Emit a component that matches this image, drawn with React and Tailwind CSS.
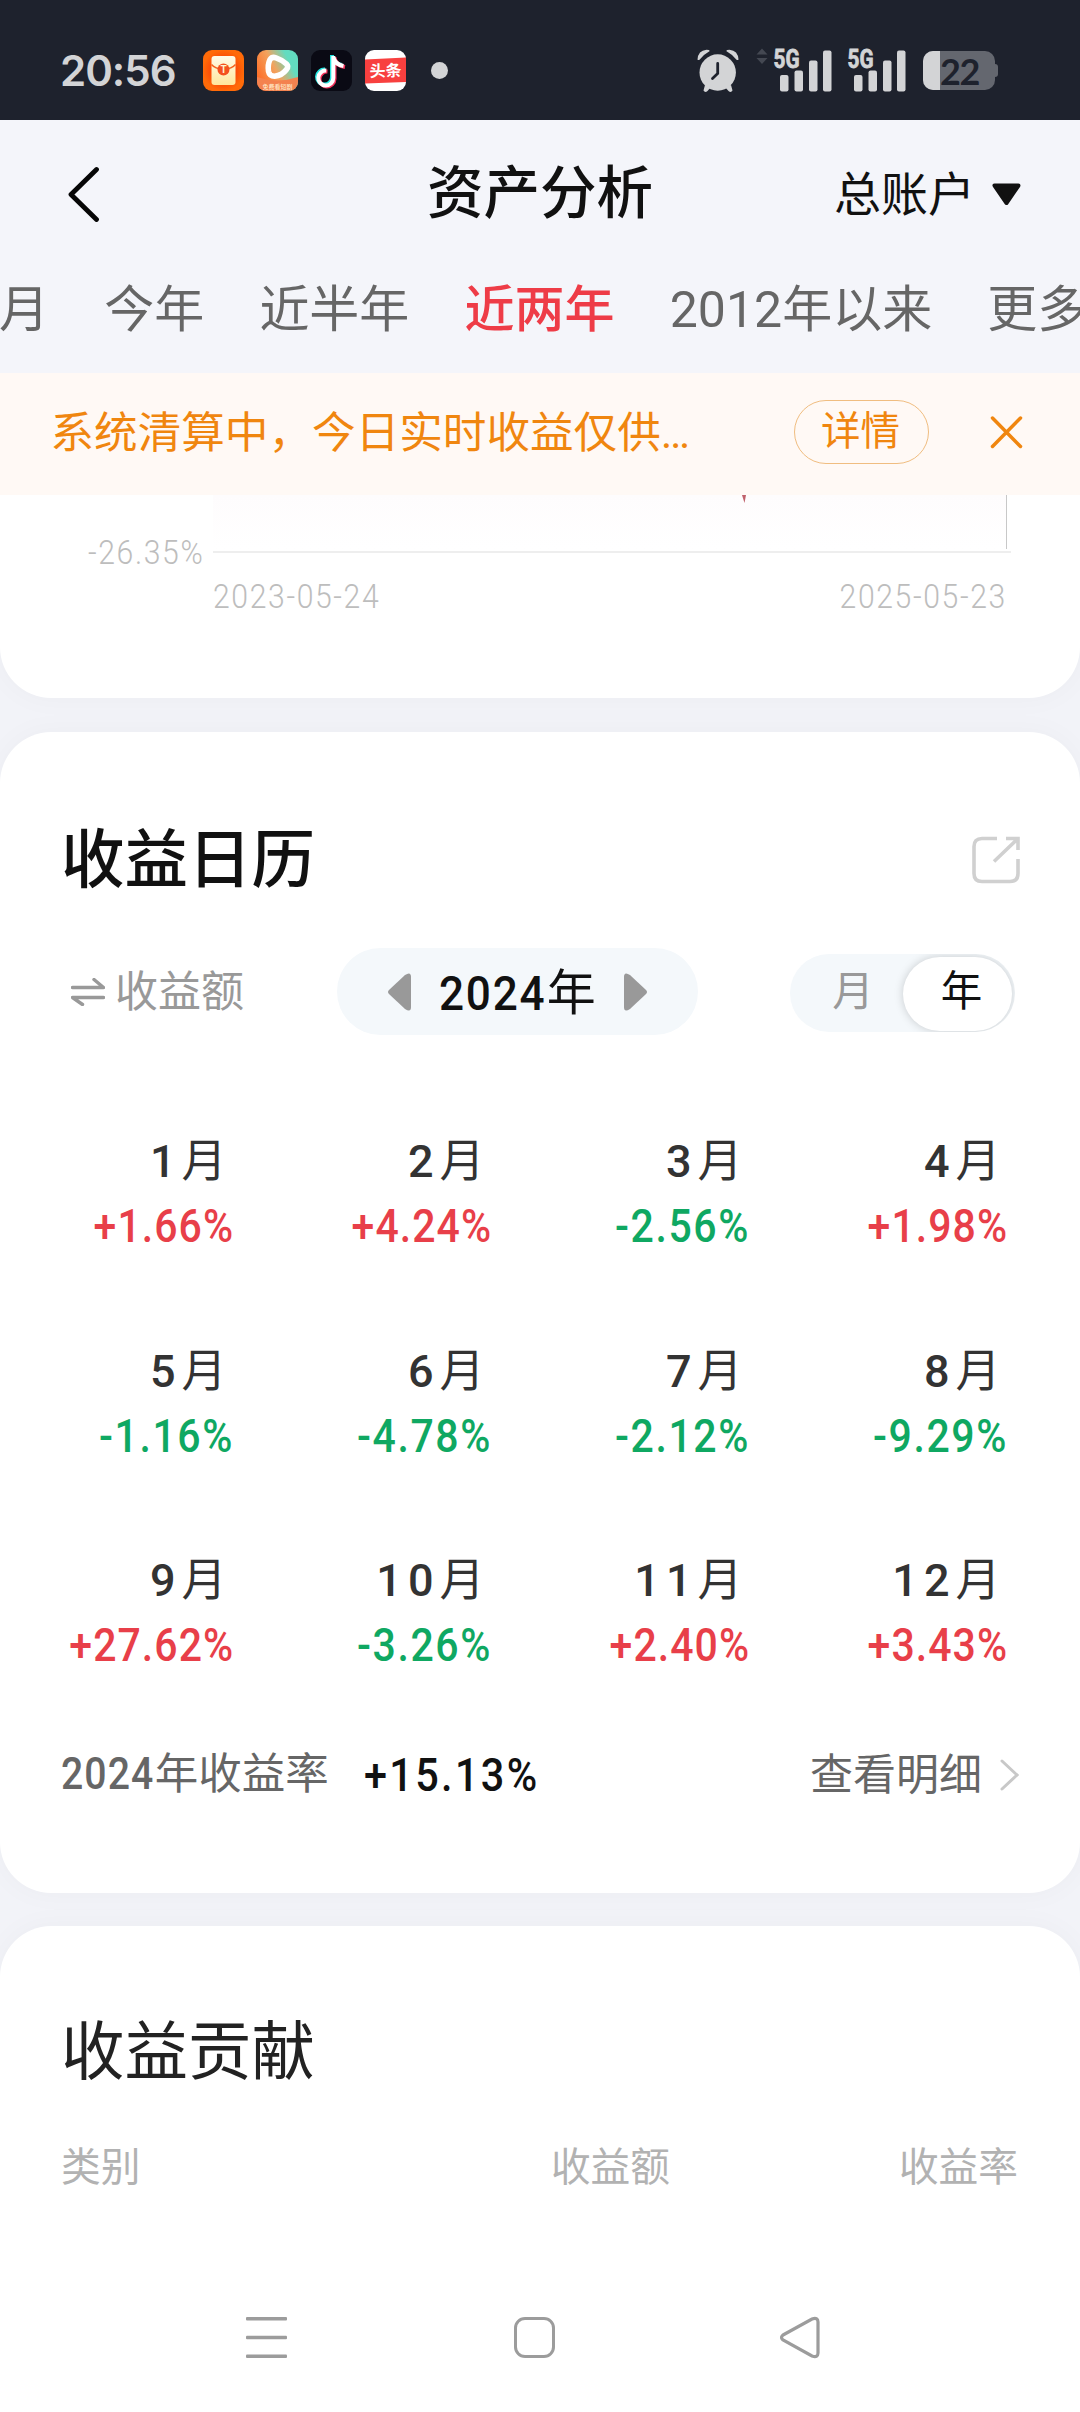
const months = [
  { name: "1", rate: "+1.66%" },
  { name: "2", rate: "+4.24%" },
  { name: "3", rate: "-2.56%" },
  { name: "4", rate: "+1.98%" },
  { name: "5", rate: "-1.16%" },
  { name: "6", rate: "-4.78%" },
  { name: "7", rate: "-2.12%" },
  { name: "8", rate: "-9.29%" },
  { name: "9", rate: "+27.62%" },
  { name: "10", rate: "-3.26%" },
  { name: "11", rate: "+2.40%" },
  { name: "12", rate: "+3.43%" },
];

const ranges = ["月", "今年", "近半年", "近两年", "2012年以来", "更多"];

function AppIcons() {
  return (
    <div className="flex items-center gap-[13px]">
      <svg width="41" height="41" viewBox="0 0 41 41">
        <defs>
          <radialGradient id="packet">
            <stop offset="0.6" stopColor="#fb4a07" />
            <stop offset="1" stopColor="#ff6a08" />
          </radialGradient>
          <linearGradient id="paper" x1="0" y1="0" x2="0" y2="1">
            <stop offset="0" stopColor="#fffbe8" />
            <stop offset="1" stopColor="#ffe79c" />
          </linearGradient>
        </defs>
        <rect width="41" height="41" rx="9" fill="url(#packet)" />
        <rect x="8.5" y="6" width="24" height="29" rx="3" fill="url(#paper)" />
        <path d="M8.5 14.5 Q12 19 20.5 19 Q29 19 32.5 14.5" fill="none" stroke="#f4601c" strokeWidth="1.3" />
        <circle cx="20.5" cy="19.5" r="6" fill="#f4511e" />
        <text x="20.5" y="23.3" textAnchor="middle" fontSize="10" fontWeight="700" fill="#fff3cf" fontFamily="Roboto, sans-serif">
          T
        </text>
      </svg>
      <svg width="41" height="41" viewBox="0 0 41 41">
        <defs>
          <linearGradient id="video" x1="0" y1="0.7" x2="1" y2="0.2">
            <stop offset="0" stopColor="#ff6a24" />
            <stop offset="0.45" stopColor="#f2a35e" />
            <stop offset="0.8" stopColor="#62dcc0" />
          </linearGradient>
          <clipPath id="videoClip">
            <rect width="41" height="41" rx="9" />
          </clipPath>
        </defs>
        <g clipPath="url(#videoClip)">
          <rect width="41" height="41" fill="url(#video)" />
          <path d="M0 27 Q20 34 41 27 V41 H0 Z" fill="#f4824f" />
        </g>
        <path
          d="M13 9.5 Q15 6.5 19 7.8 Q25.5 10 29.5 14 Q32 16.5 29.5 19.5 Q25 25.5 17.5 26.3 Q12.5 26.3 11.5 21.5 Q10.5 14.5 13 9.5 Z"
          fill="none"
          stroke="#fff"
          strokeWidth="5.5"
          strokeLinejoin="round"
        />
        <text x="20.5" y="38.5" textAnchor="middle" fontSize="6" fontWeight="500" fill="#ffe9c8" fontFamily="'Noto Sans CJK SC', sans-serif">
          免费看短剧
        </text>
      </svg>
      <svg width="41" height="41" viewBox="0 0 41 41">
        <rect width="41" height="41" rx="9" fill="#0a0a14" />
        <g fill="none" strokeWidth="4">
          <path d="M21 5 V27 A7.5 7.5 0 1 1 14 19.5 M21 6 Q22.5 14 31 15" stroke="#25e5e0" />
          <path d="M23.5 7 V29 A7.5 7.5 0 1 1 16.5 21.5 M23.5 8 Q25 15.5 34 17" stroke="#f3305a" />
          <path d="M22.3 6 V28 A7.5 7.5 0 1 1 15.3 20.5 M22.3 7 Q24 14.5 32.5 16" stroke="#fff" />
        </g>
      </svg>
      <svg width="41" height="41" viewBox="0 0 41 41">
        <rect width="41" height="41" rx="9" fill="#fff" />
        <path d="M0 9.5 L41 7.5 V32 L0 33.5 Z" fill="#f8403f" />
        <text
          x="20.5"
          y="26.5"
          textAnchor="middle"
          fontSize="16"
          fontWeight="700"
          fill="#fff"
          fontFamily="'Noto Sans CJK SC', sans-serif"
          transform="rotate(-2 20 20)"
        >
          头条
        </text>
      </svg>
    </div>
  );
}

function Signal() {
  return (
    <svg className="overflow-visible" width="58" height="43" viewBox="0 0 58 43" fill="#d3d4d6">
      <text
        x="-0.5"
        y="18.5"
        fontSize="25"
        fontWeight="700"
        stroke="#d3d4d6"
        strokeWidth="0.8"
        textLength="26"
        lengthAdjust="spacingAndGlyphs"
        fontFamily="Roboto, sans-serif"
      >
        5G
      </text>
      <rect x="6" y="26" width="8.5" height="16.5" rx="2" />
      <rect x="20.5" y="21.5" width="8.5" height="21" rx="2" />
      <rect x="35" y="11.5" width="8.5" height="31" rx="2" />
      <rect x="49" y="1.5" width="8.5" height="41" rx="2" />
    </svg>
  );
}

function StatusBar() {
  return (
    <div className="flex h-[120px] items-center bg-[#1e222d] pt-[21px] pl-[60px] pr-[82px]">
      <span className="w-[143px] font-['Inter',sans-serif] text-[42px] leading-none font-semibold tracking-[-1px] text-[#d3d4d6]">
        20:56
      </span>
      <AppIcons />
      <span className="ml-[25px] size-[17px] rounded-full bg-[#d3d4d6]" />

      <div className="ml-auto flex items-center">
        <svg width="42" height="44" viewBox="0 0 42 44" fill="#d3d4d6">
          <path d="M0.5 10.5 Q1 1.5 9.5 0.7 Q12.5 0.7 12.8 2 Q6.5 5.5 2.5 10.8 Q1 11.5 0.5 10.5 Z" />
          <path d="M41.5 10.5 Q41 1.5 32.5 0.7 Q29.5 0.7 29.2 2 Q35.5 5.5 39.5 10.8 Q41 11.5 41.5 10.5 Z" />
          <path d="M8 36 L6.5 41.5 Q8 44 10.5 42 L14 38 Z M34 36 L35.5 41.5 Q34 44 31.5 42 L28 38 Z" />
          <circle cx="20.7" cy="23.5" r="18.2" />
          <path d="M20.7 14.5 V24.5 L15.5 29.5" fill="none" stroke="#1e222d" strokeWidth="2.8" strokeLinecap="round" />
        </svg>
        <svg className="mr-[6px] mb-[28px] ml-[17px]" width="12" height="17" viewBox="0 0 12 17" fill="#444852">
          <path d="M0.5 6.5 L6 0.5 L11.5 6.5 Z M0.5 10 H11.5 L6 16 Z" />
        </svg>
        <Signal />
        <div className="ml-4">
          <Signal />
        </div>
        <div className="ml-[17px] flex items-center">
          <div className="flex h-[39px] w-[72px] items-center rounded-[10px] bg-[#64676f]">
            <div className="h-full w-[17px] rounded-l-[10px] bg-[#d3d4d6]" />
            <span className="font-['Lato',sans-serif] text-[36px] leading-[38px] font-bold tracking-[-1.5px] text-[#1e222d]">
              22
            </span>
          </div>
          <div className="h-[13px] w-[3px] rounded-r bg-[#64676f]" />
        </div>
      </div>
    </div>
  );
}

function Header() {
  return (
    <header className="bg-[#f4f5fa]">
      <div className="flex h-[147px] items-center justify-between pr-[59px] pl-[67px]">
        <div className="w-[295px]">
          <svg width="34" height="56" viewBox="0 0 34 56" fill="none" stroke="#060606" strokeWidth="4.8" strokeLinecap="round" strokeLinejoin="round">
            <path d="M29.5 3.5 L4 28.5 L29.5 53.5" />
          </svg>
        </div>
        <h1 className="pt-[2px] text-[56.5px] leading-none font-medium text-[#111]">资产分析</h1>
        <div className="flex w-[303px] items-center justify-end gap-[17px] text-[#111]">
          <span className="pt-[2px] text-[47px] leading-none">总账户</span>
          <svg className="mt-[2px]" width="29" height="23" viewBox="0 0 29 23" fill="#111" stroke="#111" strokeWidth="4" strokeLinejoin="round">
            <path d="M2.5 2.5 H26.5 L14.5 20 Z" />
          </svg>
        </div>
      </div>
      <nav className="-ml-px flex h-[106px] gap-[55.2px] overflow-hidden pt-[18px] whitespace-nowrap">
        {ranges.map((r) => (
          <span
            key={r}
            className={
              r === "近两年"
                ? "shrink-0 text-[50px] leading-[50px] font-medium text-[#ee3c47]"
                : "shrink-0 text-[50px] leading-[50px] text-[#666]"
            }
          >
            {r}
          </span>
        ))}
      </nav>
    </header>
  );
}

function Notice() {
  return (
    <div className="flex h-[122px] items-center bg-[#fff9f5] pr-[57px] pb-[4px] pl-[50.5px] text-[#f0860f]">
      <span className="flex-1 pt-[4px] text-[43.6px] leading-none">系统清算中，今日实时收益仅供…</span>
      <button className="h-[64px] w-[135px] rounded-full border-[1.5px] border-[#f0bd80] pr-[2px] text-[39.5px] leading-none">
        详情
      </button>
      <svg className="ml-[61px]" width="33" height="33" viewBox="0 0 33 33" stroke="#f0860f" strokeWidth="3.5" strokeLinecap="round">
        <path d="M2.5 2 L30.5 30.5 M30.5 2 L2.5 30.5" />
      </svg>
    </div>
  );
}

function ChartTail() {
  return (
    <section className="h-[203px] rounded-b-[51px] bg-white text-[33.5px] leading-none font-light tracking-[1.8px] text-[#bdbdbd] shadow-[0_0_30px_rgba(20,20,50,0.03)]">
      <div className="flex h-[73px] pr-[69px]">
        <div className="w-[213px] pt-[41px] pr-[9px] text-right">
          <span className="inline-block origin-right scale-x-90">-26.35%</span>
        </div>
        <svg width="798" height="73" viewBox="0 0 798 73">
          <defs>
            <linearGradient id="area" x1="0" y1="0" x2="0" y2="1">
              <stop offset="0" stopColor="#fefcfd" />
              <stop offset="1" stopColor="#ffffff" />
            </linearGradient>
          </defs>
          <rect width="794" height="54" fill="url(#area)" />
          <path d="M529 0 H533 L531.5 8 Z" fill="#c0616b" />
          <rect x="793" width="1" height="54" fill="#c8c8c8" />
          <rect y="56" width="798" height="2" fill="#eeeeee" />
        </svg>
      </div>
      <div className="flex justify-between pt-[12px] pr-[73px] pl-[213px]">
        <span className="origin-left scale-x-90">2023-05-24</span>
        <span className="origin-right scale-x-90">2025-05-23</span>
      </div>
    </section>
  );
}

function Calendar() {
  return (
    <section className="mt-[34px] h-[1161px] rounded-[51px] bg-white shadow-[0_0_30px_rgba(20,20,50,0.03)]">
      <div className="flex items-center justify-between pt-[97px] pr-[60px] pl-[61px]">
        <h2 className="text-[63.5px] leading-[64px] font-medium text-[#111]">收益日历</h2>
        <svg className="mb-[3px]" width="48" height="48" viewBox="0 0 48 48" fill="none" stroke="#d0d0d0" strokeWidth="3.6">
          <path d="M25 2.5 H10 Q2 2.5 2 10.5 V37.5 Q2 45.5 10 45.5 H38 Q46 45.5 46 37.5 V23" />
          <path d="M34 2.5 H46 V14 M46 2.5 L22 25.5" />
        </svg>
      </div>

      <div className="flex items-center pt-[55px] pr-[65px] pl-[71px]">
        <div className="flex w-[266px] items-center gap-[10px] text-[#999]">
          <svg width="34" height="28" viewBox="0 0 34 28" fill="none" stroke="#999" strokeWidth="3.4" strokeLinecap="round" strokeLinejoin="round">
            <path d="M1.5 9.5 H32.5 L23 1.5 M32.5 19.5 H1.5 L11.5 26.5" />
          </svg>
          <span className="pt-[2px] text-[43px] leading-none">收益额</span>
        </div>
        <div className="flex h-[87px] w-[361px] items-center justify-center gap-[28px] rounded-full bg-[#f4f8fb]">
          <svg width="23" height="38" viewBox="0 0 23 38" fill="#999">
            <path d="M1 17 L17 2 Q23 -2 23 4 V34 Q23 40 17 36 L1 21 Q-1 19 1 17 Z" />
          </svg>
          <span className="pt-[3px] text-[49px] leading-none font-medium text-[#111]">
            <span className="-mr-[12px] inline-block origin-left scale-x-90 tracking-[2px]">2024</span>
            <span className="font-normal">年</span>
          </span>
          <svg width="23" height="38" viewBox="0 0 23 38" fill="#999">
            <path d="M22 17 L6 2 Q0 -2 0 4 V34 Q0 40 6 36 L22 21 Q24 19 22 17 Z" />
          </svg>
        </div>
        <div className="mt-[3px] ml-auto flex h-[78px] w-[225px] items-center overflow-hidden rounded-full bg-[#f4f8fb] text-[41.5px] leading-none">
          <span className="w-[113px] pb-[2px] pl-[13px] text-center text-[#999]">月</span>
          <span className="mt-[2px] h-[74px] w-[109px] rounded-full bg-white pt-[14px] pl-[8px] text-center text-[#111] shadow-[0_0_10px_rgba(0,0,0,0.18)]">
            年
          </span>
        </div>
      </div>

      <div className="grid grid-cols-[234px_258px_258px_258px] gap-y-[83.5px] pt-[101px]">
        {months.map((m) => (
          <div key={m.name} className="flex h-[126px] flex-col items-end">
            <span className="pr-[1.5px] text-[45px] leading-[52px] tracking-[6px] text-[#333]">
              <span className="font-medium">{m.name}</span>月
            </span>
            <span
              className={
                m.rate[0] === "+"
                  ? "mt-[13px] origin-right scale-x-90 text-[45.5px] leading-[52px] font-medium tracking-[1.2px] text-[#e83f49]"
                  : "mt-[13px] origin-right scale-x-90 text-[45.5px] leading-[52px] font-medium tracking-[1.8px] text-[#0fa862]"
              }
            >
              {m.rate}
            </span>
          </div>
        ))}
      </div>

      <div className="flex items-center pt-[71px] pr-[61px] pl-[61px] leading-none text-[#666]">
        <span className="text-[43.5px]">
          <span className="-mr-[10px] inline-block origin-left scale-x-90 font-medium tracking-[1.2px]">2024</span>年收益率
        </span>
        <span className="ml-[35px] origin-left scale-x-90 text-[46px] font-medium tracking-[2.6px] text-[#111]">
          +15.13%
        </span>
        <span className="ml-auto text-[43px]">查看明细</span>
        <svg className="ml-[18px]" width="19" height="32" viewBox="0 0 19 32" fill="none" stroke="#c8c8c8" strokeWidth="3" strokeLinecap="round">
          <path d="M2 2 L17 16 L2 30" />
        </svg>
      </div>
    </section>
  );
}

function Contribution() {
  return (
    <section className="mt-[33px] h-[486px] rounded-t-[51px] bg-white pt-[95px] shadow-[0_0_30px_rgba(20,20,50,0.03)]">
      <h2 className="pl-[61px] text-[63.5px] leading-[64px] text-[#222]">收益贡献</h2>
      <div className="grid grid-cols-3 pt-[63px] pr-[62px] pl-[61px] text-[39.7px] leading-[40px] text-[#b2b2b2]">
        <span>类别</span>
        <span className="pr-[29px] text-right">收益额</span>
        <span className="text-right">收益率</span>
      </div>
      <div className="flex items-center pt-[128px] pl-[246px]">
        <svg width="41" height="43" viewBox="0 0 41 43" fill="#9c9c9c">
          <rect y="1" width="41" height="3.6" rx="1" />
          <rect y="19.7" width="41" height="3.6" rx="1" />
          <rect y="38.4" width="41" height="3.6" rx="1" />
        </svg>
        <div className="ml-[227px] size-[41px] rounded-[11px] border-[3.5px] border-[#9c9c9c]" />
        <svg className="ml-[225px]" width="41" height="43" viewBox="0 0 41 43" fill="none" stroke="#9c9c9c" strokeWidth="3.2">
          <path d="M3 19 L32 3 Q38 1 38 6 V37 Q38 42 32 40 L3 24 Q0 21.5 3 19 Z" />
        </svg>
      </div>
    </section>
  );
}

export default function App() {
  return (
    <div className="h-[2412px] w-[1080px] overflow-hidden bg-[#f2f3f8] font-['Roboto','Noto_Sans_CJK_SC',sans-serif]">
      <StatusBar />
      <Header />
      <Notice />
      <main className="overflow-hidden">
        <ChartTail />
        <Calendar />
        <Contribution />
      </main>
    </div>
  );
}
